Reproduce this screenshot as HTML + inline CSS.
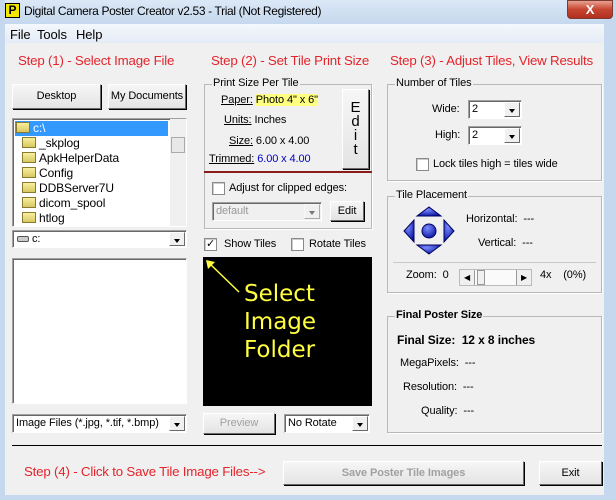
<!DOCTYPE html>
<html><head><style>
*{box-sizing:border-box;margin:0;padding:0}
body{width:616px;height:500px;position:relative;overflow:hidden;font-family:"Liberation Sans",sans-serif;font-size:11px;letter-spacing:-0.1px;color:#000;background:#f0f0f0}
.a{position:absolute;white-space:nowrap}
.red{color:#e3242b;font-size:13.3px;letter-spacing:-0.2px}
.btn{position:absolute;white-space:nowrap;background:linear-gradient(#f6f6f6,#e4e4e4);border:1px solid #fff;border-right-color:#696969;border-bottom-color:#696969;box-shadow:1px 1px 0 #000;text-align:center}
.sunk{position:absolute;white-space:nowrap;background:#fff;border:1px solid #a0a0a0;border-right-color:#fff;border-bottom-color:#fff;box-shadow:inset 1px 1px 0 #696969}
.grp{position:absolute;border:1px solid #b8b8b8;box-shadow:1px 1px 0 #fff}
.gt{position:absolute;top:-8px;left:7px;background:#f0f0f0;padding:0 1px;white-space:nowrap}
.dd{position:absolute;right:1px;top:1px;bottom:1px;width:16px;background:#f0f0f0;border:1px solid #fff;border-right-color:#696969;border-bottom-color:#696969}
.dd:after{content:"";position:absolute;left:4px;top:6px;border:3px solid transparent;border-top:4px solid #000;border-bottom:0}
.cb{position:absolute;width:13px;height:13px;background:#fff;border:1px solid #8a8a8a;box-shadow:inset 1px 1px 0 #ccc}
.fold{display:inline-block;width:14px;height:11px;background:linear-gradient(#f8f0a0,#d8c860);border:1px solid #8a7a30;vertical-align:-1px;margin-right:3px}
</style></head><body>
<div class="a" style="left:0;top:0;width:616px;height:24px;background:linear-gradient(#dbe8f6,#c5d8ee)"></div>
<div class="a" style="left:0;top:0;width:5px;height:500px;background:#c5d8ee"></div>
<div class="a" style="left:604px;top:0;width:12px;height:500px;background:#c5d8ee"></div>
<div class="a" style="left:0;top:495px;width:616px;height:5px;background:#c5d8ee"></div>
<div class="a" style="left:5px;top:3px;width:15px;height:15px;background:#f4e800;border:1px solid #000;font-weight:bold;font-size:12px;line-height:13px;text-align:center">P</div>
<div class="a" style="left:24px;top:4px;font-size:12px;letter-spacing:-0.35px">Digital Camera Poster Creator v2.53 - Trial (Not Registered)</div>
<div class="a" style="left:567px;top:0;width:46px;height:19px;background:linear-gradient(#e8a090,#c74530 50%,#b03020);border:1px solid #7a3a30;border-radius:0 0 4px 4px;color:#fff;font-weight:bold;text-align:center;font-size:13px;line-height:17px">X</div>
<div class="a" style="left:5px;top:24px;width:599px;height:19px;background:linear-gradient(#f4f7fb,#e4ecf6)"></div>
<div class="a" style="left:10px;top:27px;font-size:13px">File</div>
<div class="a" style="left:37px;top:27px;font-size:13px">Tools</div>
<div class="a" style="left:76px;top:27px;font-size:13px">Help</div>

<div class="a red" style="left:18px;top:53px">Step (1) - Select Image File</div>
<div class="a red" style="left:211px;top:53px">Step (2) - Set Tile Print Size</div>
<div class="a red" style="left:390px;top:53px">Step (3) - Adjust Tiles, View Results</div>

<div class="btn" style="left:12px;top:84px;width:89px;height:25px;line-height:23px">Desktop</div>
<div class="btn" style="left:108px;top:84px;width:78px;height:25px;line-height:23px">My Documents</div>

<div class="sunk" style="left:12px;top:118px;width:175px;height:109px;overflow:hidden;line-height:15px;padding:2px 0 0 3px;font-size:12px">
<div style="background:#3399ff;color:#fff;width:153px;margin-left:-1px;padding-left:1px"><span class="fold"></span>c:\</div>
<div style="padding-left:6px"><span class="fold"></span>_skplog</div>
<div style="padding-left:6px"><span class="fold"></span>ApkHelperData</div>
<div style="padding-left:6px"><span class="fold"></span>Config</div>
<div style="padding-left:6px"><span class="fold"></span>DDBServer7U</div>
<div style="padding-left:6px"><span class="fold"></span>dicom_spool</div>
<div style="padding-left:6px"><span class="fold"></span>htlog</div>
<div style="position:absolute;right:0;top:0;width:16px;height:107px;background:#f0f0f0"><div style="position:absolute;left:1px;top:18px;width:14px;height:16px;background:#e8e8e8;border:1px solid #aaa"></div></div>
</div>
<div class="sunk" style="left:12px;top:230px;width:175px;height:18px;padding:2px 0 0 4px"><span style="display:inline-block;width:12px;height:6px;border:1px solid #555;border-radius:2px;background:#ccc;margin-right:3px"></span>c:<div class="dd"></div></div>
<div class="sunk" style="left:12px;top:258px;width:175px;height:146px"></div>
<div class="sunk" style="left:12px;top:414px;width:175px;height:19px;padding:2px 0 0 3px;overflow:hidden">Image Files (*.jpg, *.tif, *.bmp)<div class="dd"></div></div>

<div class="grp" style="left:204px;top:84px;width:168px;height:145px"><div class="gt">Print Size Per Tile</div></div>
<div class="a" style="left:221px;top:94px"><u>Paper:</u> <span style="background:#ffff80">Photo 4" x 6"</span></div>
<div class="a" style="left:224px;top:114px"><u>Units:</u> Inches</div>
<div class="a" style="left:229px;top:135px"><u>Size:</u> 6.00 x 4.00</div>
<div class="a" style="left:209px;top:153px"><u>Trimmed:</u> <span style="color:#0000c0">6.00 x 4.00</span></div>
<div class="btn" style="left:342px;top:89px;width:27px;height:80px;font-size:15px;line-height:14px;padding-top:11px">E<br>d<br>i<br>t</div>
<div class="a" style="left:204px;top:171px;width:168px;height:2px;background:#8b1a1a"></div>
<div class="cb" style="left:212px;top:182px"></div>
<div class="a" style="left:229px;top:182px">Adjust for clipped edges:</div>
<div class="sunk" style="left:212px;top:202px;width:110px;height:19px;background:#f0f0f0;color:#999;padding:2px 0 0 3px">default<div class="dd" style="opacity:.5"></div></div>
<div class="btn" style="left:330px;top:201px;width:34px;height:20px;line-height:18px">Edit</div>

<div class="cb" style="left:204px;top:238px;font-size:11px;line-height:10px;text-align:center">✓</div>
<div class="a" style="left:224px;top:238px">Show Tiles</div>
<div class="cb" style="left:291px;top:238px"></div>
<div class="a" style="left:309px;top:238px">Rotate Tiles</div>
<div class="a" style="left:203px;top:257px;width:169px;height:149px;background:#000"></div>
<svg class="a" style="left:203px;top:257px" width="169" height="149"><line x1="5" y1="5" x2="36" y2="35" stroke="#ffff40" stroke-width="1.5"/><path d="M3 3 L12 5 L5 12Z" fill="#ffff40"/></svg>
<div class="a" style="left:244px;top:280px;color:#ffff40;font-size:23px;line-height:28px;letter-spacing:0;font-family:'DejaVu Sans',sans-serif">Select<br>Image<br>Folder</div>
<div class="btn" style="left:203px;top:413px;width:72px;height:21px;line-height:19px;color:#a0a0a0">Preview</div>
<div class="sunk" style="left:284px;top:414px;width:86px;height:19px;padding:2px 0 0 3px">No Rotate<div class="dd"></div></div>

<div class="grp" style="left:387px;top:84px;width:215px;height:97px"><div class="gt">Number of Tiles</div></div>
<div class="a" style="left:432px;top:103px">Wide:</div>
<div class="sunk" style="left:468px;top:100px;width:54px;height:19px;padding:2px 0 0 3px">2<div class="dd"></div></div>
<div class="a" style="left:435px;top:129px">High:</div>
<div class="sunk" style="left:468px;top:126px;width:54px;height:19px;padding:2px 0 0 3px">2<div class="dd"></div></div>
<div class="cb" style="left:416px;top:158px"></div>
<div class="a" style="left:433px;top:158px">Lock tiles high = tiles wide</div>

<div class="grp" style="left:387px;top:196px;width:215px;height:97px"><div class="gt">Tile Placement</div></div>
<svg class="a" style="left:402px;top:205px" width="54" height="52"><defs><radialGradient id="g" cx="0.4" cy="0.3" r="0.8"><stop offset="0" stop-color="#7a8cff"/><stop offset="1" stop-color="#000a9a"/></radialGradient></defs>
<path d="M15 11 L27 2 L39 11Z" fill="url(#g)" stroke="#000060"/><path d="M15 40 L39 40 L27 49Z" fill="url(#g)" stroke="#000060"/>
<path d="M12 15 L12 37 L2 26Z" fill="url(#g)" stroke="#000060"/><path d="M42 15 L42 37 L52 26Z" fill="url(#g)" stroke="#000060"/><circle cx="27" cy="26" r="7" fill="url(#g)" stroke="#000060"/></svg>
<div class="a" style="left:466px;top:213px">Horizontal:&nbsp; ---</div>
<div class="a" style="left:478px;top:237px">Vertical:&nbsp; ---</div>
<div class="a" style="left:393px;top:262px;width:203px;height:1px;background:#c8c8c8"></div>
<div class="a" style="left:406px;top:269px">Zoom:&nbsp; 0</div>
<div class="a" style="left:459px;top:269px;width:73px;height:17px;background:#fafafa;border:1px solid #bbb"><div style="position:absolute;left:0;top:0;width:15px;height:15px;background:#f0f0f0;border-right:1px solid #999;font-size:8px;line-height:15px;text-align:center">◀</div><div style="position:absolute;left:17px;top:0;width:8px;height:15px;background:#f0f0f0;border:1px solid #999"></div><div style="position:absolute;right:0;top:0;width:15px;height:15px;background:#f0f0f0;border-left:1px solid #999;font-size:8px;line-height:15px;text-align:center">▶</div></div>
<div class="a" style="left:540px;top:269px">4x&nbsp;&nbsp;&nbsp; (0%)</div>

<div class="grp" style="left:387px;top:316px;width:215px;height:117px"><div class="gt" style="font-weight:bold">Final Poster Size</div></div>
<div class="a" style="left:397px;top:333px;font-weight:bold;font-size:12px">Final Size:&nbsp; 12 x 8 inches</div>
<div class="a" style="left:400px;top:357px">MegaPixels:&nbsp; ---</div>
<div class="a" style="left:403px;top:381px">Resolution:&nbsp; ---</div>
<div class="a" style="left:421px;top:405px">Quality:&nbsp; ---</div>

<div class="a" style="left:12px;top:445px;width:590px;height:1px;background:#000"></div>
<div class="a red" style="left:24px;top:464px">Step (4) - Click to Save Tile Image Files--&gt;</div>
<div class="btn" style="left:283px;top:461px;width:241px;height:24px;line-height:22px;color:#a0a0a0;font-weight:bold">Save Poster Tile Images</div>
<div class="btn" style="left:539px;top:461px;width:63px;height:24px;line-height:22px">Exit</div>
</body></html>
